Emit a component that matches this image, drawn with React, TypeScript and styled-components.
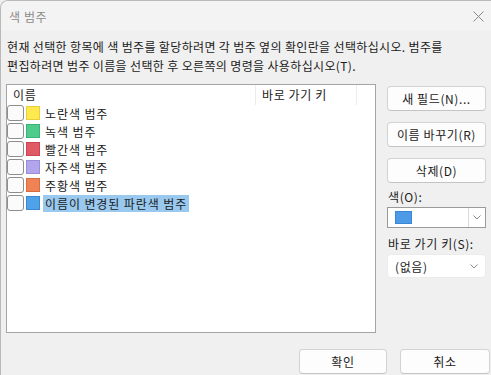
import React from 'react';
import styled, { createGlobalStyle } from 'styled-components';

const GlobalStyle = createGlobalStyle`
  html, body {
    margin: 0;
    padding: 0;
    background: #f0f0f0;
  }
  body {
    font-family: "Noto Sans CJK KR", "Noto Sans", sans-serif;
    font-size: 12px;
    letter-spacing: 0.6px;
    color: #1b1b1b;
  }
`;

const Window = styled.div`
  width: 491px;
  height: 375px;
  box-sizing: border-box;
  overflow: hidden;
  background: #f0f0f0;
  border-top: 1px solid #b9b9b9;
  border-left: 1px solid #b9b9b9;
  border-top-left-radius: 8px;
  display: flex;
  flex-direction: column;
`;

const TitleBar = styled.div`
  height: 30px;
  flex: none;
  display: flex;
  align-items: center;
  justify-content: space-between;
  padding: 0 7px 0 8px;
  background: #f3f3f3;
  color: #8c8c8c;
  font-size: 12px;
`;

const CloseButton = styled.div`
  width: 12px;
  height: 12px;
  display: flex;
  align-items: center;
  justify-content: center;
`;

const Description = styled.p`
  margin: 0;
  padding: 6px 0 0 6px;
  line-height: 19px;
  letter-spacing: 0.35px;
  white-space: nowrap;
`;

const Main = styled.div`
  display: flex;
  gap: 11px;
  padding: 9px 4px 0 5px;
`;

const ListBox = styled.div`
  width: 370px;
  height: 249px;
  box-sizing: border-box;
  border: 1px solid #a5a5a5;
  background: #ffffff;
`;

const HeaderRow = styled.div`
  display: grid;
  grid-template-columns: 249px 101px 1fr;
  height: 19px;
`;

const HeaderCell = styled.div<{ $divider?: boolean }>`
  padding-left: 6px;
  line-height: 20px;
  border-right: ${(p) => (p.$divider ? '1px solid #ececec' : 'none')};
  color: #1b1b1b;
`;

const Row = styled.div`
  display: flex;
  align-items: center;
  height: 18px;
`;

const Check = styled.div`
  width: 17px;
  height: 16px;
  box-sizing: border-box;
  border: 1px solid #8d8d8d;
  border-radius: 3px;
  background: #fbfbfb;
  margin-right: 2px;
`;

const Swatch = styled.div<{ $color: string; $edge: string }>`
  width: 14px;
  height: 14px;
  box-sizing: border-box;
  background: ${(p) => p.$color};
  border: 1px solid ${(p) => p.$edge};
`;

const Label = styled.span<{ $selected?: boolean }>`
  margin-left: 3px;
  padding: 0 2px;
  line-height: 17px;
  letter-spacing: 0.9px;
  background: ${(p) => (p.$selected ? '#99c9ef' : 'transparent')};
`;

const SideColumn = styled.div`
  width: 99px;
  display: flex;
  flex-direction: column;
  padding-top: 2px;
`;

const PushButton = styled.div<{ $width?: number }>`
  height: 25px;
  width: ${(p) => (p.$width ? `${p.$width}px` : 'auto')};
  box-sizing: border-box;
  border: 1px solid #d3d3d3;
  border-bottom-color: #c4c4c4;
  border-radius: 4px;
  background: #fdfdfd;
  display: flex;
  align-items: center;
  justify-content: center;
  margin-bottom: 11px;
  white-space: nowrap;
`;

const FieldLabel = styled.div<{ $top: number }>`
  margin-top: ${(p) => p.$top}px;
  line-height: 16px;
  padding-left: 1px;
  white-space: nowrap;
`;

const Combo = styled.div<{ $bordered?: boolean }>`
  height: ${(p) => (p.$bordered ? 21 : 24)}px;
  box-sizing: border-box;
  margin-top: 2px;
  display: flex;
  align-items: center;
  background: #ffffff;
  border: 1px solid ${(p) => (p.$bordered ? '#9a9a9a' : '#ececec')};
  border-radius: ${(p) => (p.$bordered ? 0 : 4)}px;
`;

const ComboValue = styled.div`
  flex: 1;
  display: flex;
  align-items: center;
  padding-left: 7px;
`;

const ComboSwatch = styled.div`
  width: 15px;
  height: 11px;
  background: #4d9be6;
  border: 1px solid #3a87d6;
`;

const DropButton = styled.div<{ $split?: boolean }>`
  width: 16px;
  align-self: stretch;
  display: flex;
  align-items: center;
  justify-content: center;
  border-left: ${(p) => (p.$split ? '1px solid #d9d9d9' : 'none')};
  margin-right: ${(p) => (p.$split ? 0 : 3)}px;
`;

const Footer = styled.div`
  display: flex;
  justify-content: flex-end;
  gap: 13px;
  padding: 16px 1px 0 0;
`;

const Chevron = () => (
  <svg width="8" height="5" viewBox="0 0 8 5">
    <path d="M0.5 0.5 L4 4 L7.5 0.5" fill="none" stroke="#8a8a8a" strokeWidth="1" />
  </svg>
);

const categories = [
  { name: '노란색 범주', color: '#ffe94f', edge: '#e6cf3a' },
  { name: '녹색 범주', color: '#4fcc8c', edge: '#3bb577' },
  { name: '빨간색 범주', color: '#e05a66', edge: '#c94552' },
  { name: '자주색 범주', color: '#b3a5ec', edge: '#9c8dd9' },
  { name: '주황색 범주', color: '#ef8355', edge: '#d86d40' },
  { name: '이름이 변경된 파란색 범주', color: '#4fa1e8', edge: '#3a8ad3', selected: true },
];

export default function App() {
  return (
    <Window>
      <GlobalStyle />
      <TitleBar>
        <span>색 범주</span>
        <CloseButton>
          <svg width="11" height="11" viewBox="0 0 11 11">
            <path d="M0.5 0.5 L10.5 10.5 M10.5 0.5 L0.5 10.5" stroke="#8a8a8a" strokeWidth="1" />
          </svg>
        </CloseButton>
      </TitleBar>
      <Description>
        현재 선택한 항목에 색 범주를 할당하려면 각 범주 옆의 확인란을 선택하십시오. 범주를
        <br />
        편집하려면 범주 이름을 선택한 후 오른쪽의 명령을 사용하십시오(T).
      </Description>
      <Main>
        <ListBox>
          <HeaderRow>
            <HeaderCell $divider>이름</HeaderCell>
            <HeaderCell $divider>바로 가기 키</HeaderCell>
            <HeaderCell />
          </HeaderRow>
          {categories.map((c) => (
            <Row key={c.name}>
              <Check />
              <Swatch $color={c.color} $edge={c.edge} />
              <Label $selected={c.selected}>{c.name}</Label>
            </Row>
          ))}
        </ListBox>
        <SideColumn>
          <PushButton>새 필드(N)...</PushButton>
          <PushButton>이름 바꾸기(R)</PushButton>
          <PushButton>삭제(D)</PushButton>
          <FieldLabel $top={-5}>색(O):</FieldLabel>
          <Combo $bordered>
            <ComboValue>
              <ComboSwatch />
            </ComboValue>
            <DropButton $split>
              <Chevron />
            </DropButton>
          </Combo>
          <FieldLabel $top={8}>바로 가기 키(S):</FieldLabel>
          <Combo>
            <ComboValue>(없음)</ComboValue>
            <DropButton>
              <Chevron />
            </DropButton>
          </Combo>
        </SideColumn>
      </Main>
      <Footer>
        <PushButton $width={88}>확인</PushButton>
        <PushButton $width={90}>취소</PushButton>
      </Footer>
    </Window>
  );
}
